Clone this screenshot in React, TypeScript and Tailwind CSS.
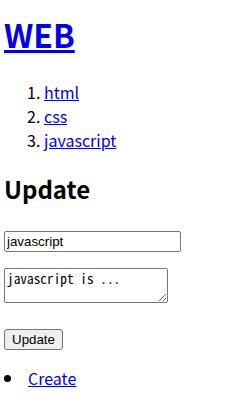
import React from 'react';

export default function App() {
  return (
    <div className="px-1 text-black font-['Noto_Sans_CJK_KR','Noto_Sans',sans-serif]">
      <h1 className="pt-[11px] text-[32px] font-bold leading-[46px]">
        <a href="#" className="text-[#0000ee] underline">WEB</a>
      </h1>

      <ol className="mt-[23px] list-decimal pl-10 text-[16px] leading-6">
        <li><a href="#" className="text-[#0000ee] underline">html</a></li>
        <li><a href="#" className="text-[#0000ee] underline">css</a></li>
        <li><a href="#" className="text-[#0000ee] underline">javascript</a></li>
      </ol>

      <h2 className="mt-[19px] text-[24px] font-bold leading-[35px]">Update</h2>

      <form className="mt-[25px] font-['Liberation_Sans',Arial,sans-serif] text-[13.33px]">
        <p>
          <input
            type="text"
            defaultValue="javascript"
            className="block h-[21px] w-[177px] rounded-[2px] border border-[#767676] px-[2px] py-[1px] text-black"
          />
        </p>
        <p className="mt-4">
          <textarea
            defaultValue="javascript is ..."
            className="block h-[35px] w-[164px] rounded-[2px] border border-[#767676] px-[2px] py-[1px] font-['Noto_Sans_Mono_CJK_KR','Liberation_Mono',monospace] text-[13.33px] leading-[17px]"
          />
        </p>
        <p className="mt-[26px]">
          <button
            type="button"
            className="block h-[21px] rounded-[3px] border border-[#767676] bg-[#efefef] px-[7px] text-[13.33px] text-black"
          >
            Update
          </button>
        </p>
      </form>

      <ul className="mt-4 text-[16px] leading-6">
        <li className="flex items-center">
          <span className="ml-0 mr-[17px] mt-[1px] h-[7px] w-[7px] rounded-full bg-black" />
          <a href="#" className="text-[#0000ee] underline">Create</a>
        </li>
      </ul>
    </div>
  );
}
